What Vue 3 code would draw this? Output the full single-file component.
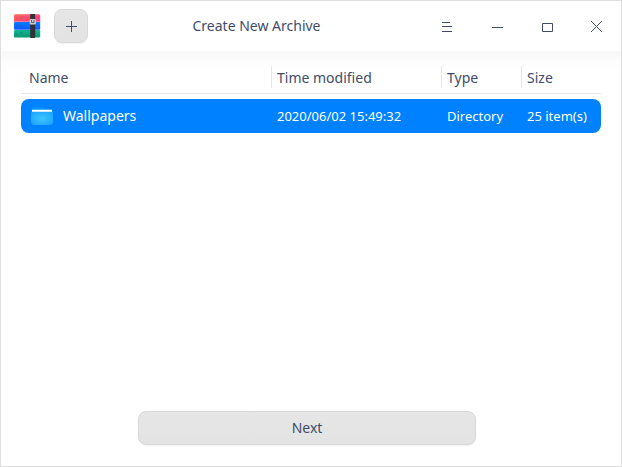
<script setup>
const columns = ['Name', 'Time modified', 'Type', 'Size']
const files = [
  { name: 'Wallpapers', time: '2020/06/02 15:49:32', type: 'Directory', size: '25 item(s)' },
]
</script>

<template>
  <div class="window">
    <header class="titlebar">
      <svg class="logo" width="28" height="26" viewBox="0 0 28 26">
        <defs>
          <linearGradient id="red" x1="0" y1="0" x2="1" y2="0.3">
            <stop offset="0" stop-color="#ff5f5c" /><stop offset="1" stop-color="#ff3f82" />
          </linearGradient>
          <linearGradient id="blue" x1="0" y1="0" x2="0" y2="1">
            <stop offset="0" stop-color="#0b7cff" /><stop offset="1" stop-color="#1059ff" />
          </linearGradient>
          <linearGradient id="green" x1="0" y1="0" x2="0" y2="1">
            <stop offset="0" stop-color="#16b391" /><stop offset="1" stop-color="#099a72" />
          </linearGradient>
        </defs>
        <path d="M2.5 1.3h23.2q1.5 0 1.5 1.5v6H1v-6q0-1.5 1.5-1.5z" fill="url(#red)" />
        <rect x="1" y="9" width="26.2" height="7.8" rx="1" fill="url(#blue)" />
        <rect x="1" y="16.9" width="26.2" height="7.6" rx="1.3" fill="url(#green)" />
        <path d="M1.3 1.9h25.4" stroke="#ff9b7d" stroke-width=".7" opacity=".7" />
        <path d="M3 5h2v1.5H3zM7 4.5h3V6H7zM3 12h3v1.5H3zM7 13h3v1.5H7zM3 20h2v1.5H3zM7 19h3v2H7z" fill="#172b70" opacity=".13" />
        <rect x="17.2" y="1" width="5" height="24" rx=".7" fill="#303236" />
        <rect x="16.7" y="6" width="6.2" height="5.6" rx="1" fill="#c9ccce" />
        <path d="M18.5 7v2.5h2.5V7" fill="none" stroke="#484a4e" stroke-width=".8" />
      </svg>
      <button class="add" aria-label="Add">
        <svg width="11" height="11" viewBox="0 0 11 11"><path d="M5.5 0v11M0 5.5h11" /></svg>
      </button>
      <h1 class="title">Create New Archive</h1>
      <nav class="controls">
        <button aria-label="Menu">
          <svg width="11" height="11" viewBox="0 0 11 11"><path d="M1 1.5h8M1 5.5h10M1 10.5h10" /></svg>
        </button>
        <button aria-label="Minimize">
          <svg width="14" height="11" viewBox="0 0 14 11"><path d="M3 6.5h11" /></svg>
        </button>
        <button aria-label="Maximize">
          <svg width="14" height="11" viewBox="0 0 14 11"><path d="M3.5 2.5h10v8h-10z" /></svg>
        </button>
        <button aria-label="Close">
          <svg width="11" height="11" viewBox="0 0 11 11"><path d="M0 0l11 11M11 0L0 11" /></svg>
        </button>
      </nav>
    </header>

    <main class="content">
      <div class="grid head">
        <span v-for="column in columns" :key="column" class="heading">{{ column }}</span>
      </div>
      <div v-for="file in files" :key="file.name" class="grid row">
        <span class="name">
          <svg width="24" height="22" viewBox="0 0 24 22">
            <defs>
              <radialGradient id="folder" cx=".5" cy=".5" r=".65">
                <stop offset="0" stop-color="#3cc5ff" /><stop offset="1" stop-color="#1ca3ff" />
              </radialGradient>
            </defs>
            <path d="M1.5 8V3.5Q1.5 2 3 2h9.5q1 0 1.5 1l.4.7h6.9q1.5 0 1.5 1.5V8z" fill="#0793f5" />
            <rect x="2" y="4.7" width="20" height="3" rx=".4" fill="#fff" />
            <path d="M1 6.8h22v9.7q0 3.5-3.5 3.5h-15Q1 20 1 16.5z" fill="url(#folder)" />
          </svg>
          {{ file.name }}
        </span>
        <span>{{ file.time }}</span>
        <span>{{ file.type }}</span>
        <span>{{ file.size }}</span>
      </div>
    </main>

    <footer class="footer"><button class="next">Next</button></footer>
  </div>
</template>

<style>
body {
  margin: 0;
}
</style>

<style scoped>
.window {
  box-sizing: border-box;
  width: 622px;
  height: 467px;
  border: 1px solid #dedede;
  background: #fff;
  display: flex;
  flex-direction: column;
  color: #414d68;
  font: 14px/20px "Noto Sans", sans-serif;
}
button {
  margin: 0;
  padding: 0;
  border: 0;
  background: none;
  color: inherit;
  font: inherit;
}
.titlebar {
  height: 50px;
  display: grid;
  grid-template-columns: 28px 34px 1fr 200px;
  column-gap: 13px;
  padding-left: 12px;
  align-items: center;
}
.logo {
  display: block;
}
.add {
  box-sizing: border-box;
  width: 34px;
  height: 34px;
  border: 1px solid #d8d8d8;
  border-radius: 8px;
  background: linear-gradient(#e6e6e6, #e3e3e3);
  box-shadow: 0 1px 1px rgba(0, 0, 0, 0.05);
  display: grid;
  place-items: center;
}
.add svg path,
.controls path {
  fill: none;
  stroke: #414d68;
  stroke-width: 1;
}
.title {
  margin: 0;
  padding-left: 4px;
  font-size: 14px;
  font-weight: 400;
  text-align: center;
}
.controls {
  display: grid;
  grid-template-columns: repeat(4, 50px);
}
.controls button {
  height: 50px;
  display: grid;
  place-items: center;
}
.content {
  flex: 1;
  padding: 15px 20px 0;
  background: linear-gradient(#f8f8f8, #fff 18px);
}
.grid {
  display: grid;
  grid-template-columns: 250px 170px 80px 80px;
  align-items: center;
}
.head {
  height: 27px;
  border-bottom: 1px solid #e6e6e6;
  align-items: start;
}
.heading {
  height: 22px;
  line-height: 23px;
  padding-left: 5px;
  border-left: 1px solid #e6e6e6;
}
.heading:first-child {
  padding-left: 8px;
  border-left: 0;
}
.row {
  height: 34px;
  margin-top: 5px;
  border-radius: 8px;
  background: #0081ff;
  color: #fff;
  font-size: 13px;
}
.row > span {
  padding-left: 6px;
}
.row .name {
  display: flex;
  align-items: center;
  gap: 9px;
  padding-left: 9px;
  font-size: 14px;
}
.footer {
  height: 55px;
  display: flex;
  justify-content: center;
  align-items: flex-start;
  padding-right: 8px;
}
.next {
  box-sizing: border-box;
  width: 338px;
  height: 34px;
  border: 1px solid #d8d8d8;
  border-radius: 8px;
  background: linear-gradient(#e6e6e6, #e3e3e3);
  box-shadow: 0 1px 1px rgba(0, 0, 0, 0.05);
}
</style>
